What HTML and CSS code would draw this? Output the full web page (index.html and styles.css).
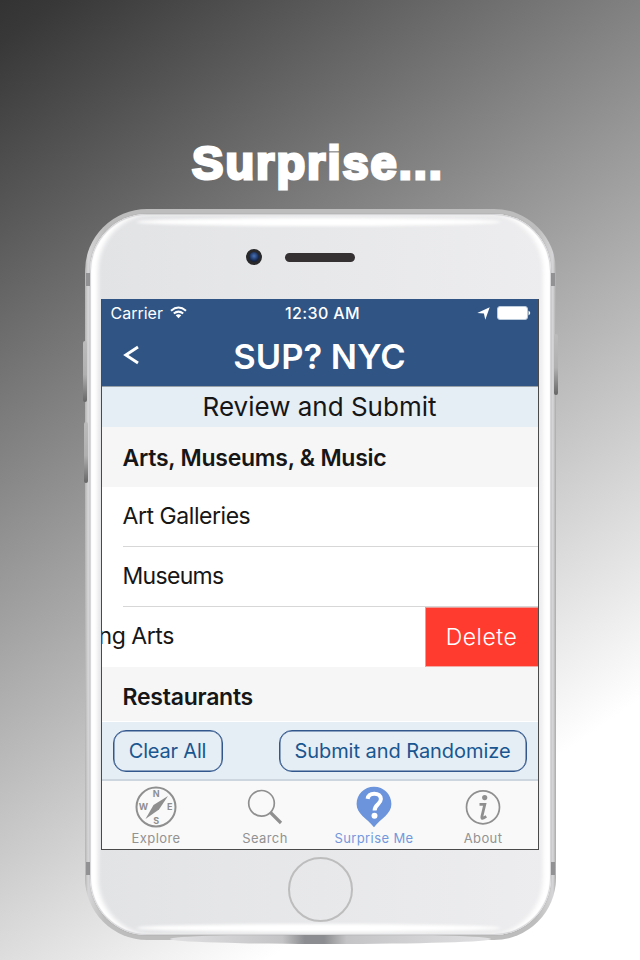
FILE: index.html
```
<!DOCTYPE html>
<html lang="en">
<head>
<meta charset="utf-8">
<title>SUP? NYC</title>
<link rel="stylesheet" href="styles.css">
</head>
<body>
<main class="promo">
  <h1 class="headline"><span>Surprise...</span></h1>
  <div class="phone">
    <i class="notch notch-tl"></i><i class="notch notch-tr"></i><i class="notch notch-bl"></i><i class="notch notch-br"></i>
    <i class="key key-up"></i><i class="key key-down"></i><i class="key key-power"></i>
    <i class="base-shadow"></i>
    <div class="face">
      <i class="glare glare-top"></i><i class="glare glare-bottom"></i>
      <div class="ear"><i class="camera"></i><i class="speaker"></i></div>
      <div class="screen">
        <header class="navbar">
          <div class="status">
            <div class="carrier"><span class="carrier-name">Carrier</span>
              <svg width="17" height="13" viewBox="0 0 17 13" fill="none" stroke="#fff" stroke-width="2"><path d="M1 4.700Q8.500-1.700 16 4.700M3.800 7.600Q8.500 3.600 13.200 7.600"/><path d="M5.700 9.300Q8.500 7.200 11.300 9.300L8.500 12.200Z" fill="#fff" stroke="none"/></svg>
            </div>
            <span class="clock">12:30 AM</span>
            <div class="power">
              <svg width="13" height="13" viewBox="0 0 13 13" fill="#fff"><path d="M12.700.3 8.300 12.700 6.900 6.500.3 6Z"/></svg>
              <svg width="34" height="14" viewBox="0 0 34 14"><rect x=".5" y=".5" width="30" height="13" rx="2.500" fill="#fff" stroke="#bccbdc"/><path d="M31.500 4.500q3.500 2.500 0 5z" fill="#fff"/></svg>
            </div>
          </div>
          <div class="titlebar">
            <svg class="back" width="16" height="20" viewBox="0 0 16 20" fill="none" stroke="#fff" stroke-width="2.900"><path d="M15 2 2.800 10 15 18"/></svg>
            <h2><span>SUP? NYC</span></h2>
          </div>
        </header>
        <div class="subtitle"><span>Review and Submit</span></div>
        <div class="list">
          <h3 class="section">Arts, Museums, &amp; Music</h3>
          <div class="row"><span>Art Galleries</span></div>
          <div class="row museums"><span>Museums</span></div>
          <div class="row swiped"><span>ng Arts</span><button class="delete">Delete</button></div>
          <h3 class="section last">Restaurants</h3>
        </div>
        <div class="toolbar"><button class="clear">Clear All</button><button class="submit">Submit and Randomize</button></div>
        <nav class="tabs">
          <a class="tab"><svg width="42" height="42" viewBox="0 0 42 42"><circle cx="21" cy="21" r="19.500" fill="none" stroke="#8f8f8f" stroke-width="2"/><path d="M33 10 24 23.500 10.500 33 18.500 19Z" fill="#8f8f8f"/><g class="points"><text x="21.500" y="11">N</text><text x="35" y="24">E</text><text x="21.300" y="37.500">S</text><text x="8.500" y="24">W</text></g></svg><span>Explore</span></a>
          <a class="tab"><svg width="42" height="42" viewBox="0 0 42 42" fill="none" stroke="#8f8f8f"><circle cx="17.500" cy="17.300" r="12.800" stroke-width="1.700"/><path d="m26.500 26.500 10.500 10.500" stroke-width="3.200"/></svg><span>Search</span></a>
          <a class="tab active"><svg width="42" height="42" viewBox="0 0 42 42"><path d="M21 .8C11.200.8 3.600 8.400 3.600 18c0 10 10 14 17.400 23.200C28.400 32 38.400 28 38.400 18 38.400 8.400 30.800.8 21 .8Z" fill="#6b94dc"/><path d="M14.600 12.800C15.200 9.300 17.600 7.700 21.200 7.700c4 0 6.700 2.100 6.700 5.400 0 5-6.300 5.300-6.300 11.300" fill="none" stroke="#fff" stroke-width="4"/><circle cx="21.500" cy="29.700" r="3" fill="#fff"/></svg><span>Surprise Me</span></a>
          <a class="tab"><svg width="42" height="42" viewBox="0 0 42 42"><circle cx="21" cy="21.300" r="16.500" fill="none" stroke="#8f8f8f" stroke-width="1.700"/><circle cx="22.700" cy="11.600" r="2.600" fill="#8f8f8f"/><path d="M17.500 18.300h5.300L19.900 30.500q-.5 2.500 1.600 1.500l2.800-1.600" fill="none" stroke="#8f8f8f" stroke-width="2.800"/></svg><span>About</span></a>
        </nav>
      </div>
      <div class="home"></div>
    </div>
  </div>
</main>
</body>
</html>
```
FILE: styles.css
```
* { box-sizing: border-box; }
body { margin: 0; font-family: Inter, "Liberation Sans", sans-serif; color: #161616; }
h1, h2, h3 { margin: 0; }
button { font: inherit; border: 0; padding: 0; white-space: nowrap; }
svg { display: block; flex: none; }
.promo {
  width: 640px; height: 960px; overflow: hidden;
  display: flex; flex-direction: column; align-items: center;
  background: linear-gradient(145deg, #333 0%, #383838 3%, #fff 81.5%);
}
.headline {
  height: 209px; padding-top: 135px; margin-left: -4px;
  font: 900 47px/56px "Liberation Sans", sans-serif; color: #fff;
  -webkit-text-stroke: 3px #fff; letter-spacing: 2px; white-space: nowrap;
}
.phone {
  position: relative; width: 471px; height: 731px; padding: 5px;
  border-radius: 62px; background: linear-gradient(90deg, #b3b3b3, #d5d5d7 3px, #bdbdbd 20px, #bdbdbd 451px, #d5d5d7 468px, #aaa);
}
.notch { position: absolute; width: 4px; height: 13px; background: #929294; }
.notch-tl { left: 1px; top: 64px; }
.notch-tr { right: 1px; top: 64px; }
.notch-bl { left: 1px; bottom: 65px; }
.notch-br { right: 1px; bottom: 65px; }
.key { position: absolute; width: 4px; height: 61px; border-radius: 2px; background: linear-gradient(#bbb, #b0b0b0 55%, #666); }
.key-up { left: -2px; top: 132px; }
.key-down { left: -1px; top: 213px; }
.key-power { right: -2px; top: 125px; }
.base-shadow { position: absolute; left: 85px; right: 65px; bottom: -4px; height: 10px; border-radius: 50%; background: linear-gradient(90deg, #e0e0e2, #c4c4c6 35%, #8c8d90 42%, #8c8d90 48%, #c4c4c6 55%, #e0e0e2); }
.face {
  position: relative; height: 721px; border-radius: 57px;
  display: flex; flex-direction: column; align-items: center;
  background: linear-gradient(90deg, #e2e3e5, #ededef);
  box-shadow: inset 0 0 1px 1px #d2d2d5, inset 9px 0 4px -1px #fff, inset -9px 0 4px -1px #fff, 0 0 1px #888;
}
.glare { position: absolute; left: 46px; right: 50px; height: 8px; border-radius: 50% / 4px; background: #fff; filter: blur(1.500px); }
.glare-top { top: 4px; }
.glare-bottom { bottom: 3px; }
.ear { width: 109px; height: 85px; margin-left: -39px; display: flex; align-items: center; justify-content: space-between; }
.camera { width: 16px; height: 16px; border-radius: 50%; border: 3px solid #29292c; background: radial-gradient(circle at 50% 40%, #4872b8, #172b52 60%, #111); }
.speaker { width: 70px; height: 9px; margin-top: 1px; border-radius: 5px; background: #353133; }
.screen {
  width: 438px; height: 551px; margin-right: 1px; overflow: hidden; border: 1px solid #4a4a4a; border-top: 0;
  display: flex; flex-direction: column; background: #fff;
}
.navbar { height: 88px; background: #305584; border-bottom: 1px solid #98a0a8; color: #fff; }
.status { display: grid; grid-template-columns: 1fr auto 1fr; align-items: center; height: 28px; padding: 0 7px 0 9px; font-size: 16px; font-weight: 500; }
.clock { letter-spacing: .4px; margin-left: 4px; }
.carrier, .power { display: flex; align-items: center; gap: 7px; }
.carrier { font-weight: 400; }
.carrier svg { margin-top: -1px; }
.power { justify-content: flex-end; }
.titlebar { display: grid; grid-template-columns: 60px 1fr 60px; align-items: center; height: 58px; }
.back { margin-left: 21px; margin-top: -2px; }
h2 { padding-top: 2px; font-size: 34.5px; font-weight: 600; line-height: 44px; text-align: center; white-space: nowrap; }
.subtitle { height: 40px; padding-bottom: 2px; background: #e5edf5; display: flex; align-items: center; justify-content: center; font-size: 26px; }
.list { height: 295px; overflow: hidden; border-bottom: 1px solid #fff; }
.section { height: 60px; padding-left: 21px; background: #f6f6f6; font-size: 23px; line-height: 62px; font-weight: 600; letter-spacing: -.25px; }
.last { line-height: 60px; }
.row { height: 60px; margin-left: 21px; border-bottom: 1px solid #d7d7d7; font-size: 23px; line-height: 58px; letter-spacing: -.45px; }
.museums { letter-spacing: -.7px; }
.swiped { display: flex; justify-content: space-between; margin-left: -3px; border: 0; }
.delete { width: 113px; height: 60px; padding-bottom: 2px; background: #ff3b30; color: #fff; border: 1px solid #ec9b96; border-right: 0; border-bottom-color: #f4aaa5; font-size: 23px; font-weight: 300; letter-spacing: .5px; }
.toolbar { height: 59px; padding: 0 11px; display: flex; align-items: center; justify-content: space-between; background: #e5edf5; border-bottom: 2px solid #cdd5de; }
.toolbar button { height: 42px; padding-top: 1px; border: 1px solid #31578c; box-shadow: inset 0 0 0 .5px #31578c; border-radius: 13px; background: none; color: #195690; font-size: 20px; letter-spacing: -.05px; }
.toolbar .clear { width: 110px; letter-spacing: -.2px; }
.submit { width: 248px; }
.tabs { flex: 1; display: grid; grid-template-columns: repeat(4, 109px); background: #f9f9f9; color: #929292; }
.tab { display: flex; flex-direction: column; align-items: center; padding-top: 5px; font-size: 13px; line-height: 20px; letter-spacing: .4px; }
.active { color: #7298dc; }
.points { font: 700 9px Inter, sans-serif; fill: #8f8f8f; text-anchor: middle; }
.home { width: 65px; height: 65px; margin: 7px 0 0 0; border: 2px solid #bdbdbe; border-radius: 50%; }
```
